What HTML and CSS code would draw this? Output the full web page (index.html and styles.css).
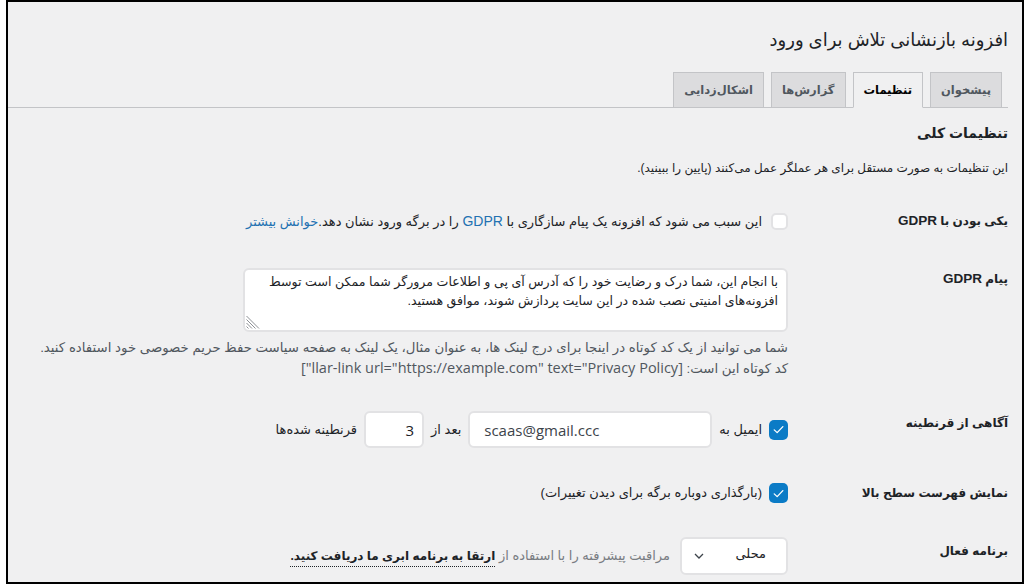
FILE: index.html
```html
<!DOCTYPE html>
<html lang="fa" dir="rtl">
<head>
<meta charset="utf-8">
<title>افزونه بازنشانی تلاش برای ورود</title>
<link rel="stylesheet" href="styles.css">
</head>
<body>
<div class="frame">
  <div class="wrap">
    <h1 class="title">افزونه بازنشانی تلاش برای ورود</h1>
    <nav class="tabs">
      <a class="tab">پیشخوان</a>
      <a class="tab active">تنظیمات</a>
      <a class="tab">گزارش‌ها</a>
      <a class="tab">اشکال‌زدایی</a>
    </nav>
    <h2 class="section">تنظیمات کلی</h2>
    <p class="intro">این تنظیمات به صورت مستقل برای هر عملگر عمل می‌کنند (پایین را ببینید).</p>

    <div class="form">
      <div class="row row-gdpr">
        <div class="th">یکی بودن با <span class="lat">GDPR</span></div>
        <div class="td">
          <label class="inline">
            <span class="cb"></span>
            <span>این سبب می شود که افزونه یک پیام سازگاری با <a class="link lat">GDPR</a> را در برگه ورود نشان دهد.<a class="link">خوانش بیشتر</a></span>
          </label>
        </div>
      </div>

      <div class="row row-msg">
        <div class="th">پیام <span class="lat">GDPR</span></div>
        <div class="td">
          <div class="area-box">
            <textarea class="area">با انجام این، شما درک و رضایت خود را که آدرس آی پی و اطلاعات مرورگر شما ممکن است توسط افزونه‌های امنیتی نصب شده در این سایت پردازش شوند، موافق هستید.</textarea>
            <svg class="grip" viewBox="0 0 14 14" width="14" height="14"><path d="M0.5 1 L13 13.5 M0.5 4.5 L9.5 13.5 M0.5 8 L6 13.5 M0.5 11.5 L2.5 13.5" stroke="#8c8f94" stroke-width="1" fill="none"/></svg>
          </div>
          <p class="desc">شما می توانید از یک کد کوتاه در اینجا برای درج لینک ها، به عنوان مثال، یک لینک به صفحه سیاست حفظ حریم خصوصی خود استفاده کنید.<br>کد کوتاه این است: <span class="code">[llar-link url="https://example.com" text="Privacy Policy"]</span></p>
        </div>
      </div>

      <div class="row row-quar">
        <div class="th">آگاهی از قرنطینه</div>
        <div class="td">
          <div class="inline">
            <span class="cb checked"><svg viewBox="0 0 20 20" width="20" height="20"><path d="M5.5 10.4 L8.6 13.3 L14.6 7" fill="none" stroke="#fff" stroke-width="1.4" stroke-linecap="round" stroke-linejoin="round"/></svg></span>
            <span>ایمیل به</span>
            <input class="field email" type="text" dir="ltr" value="scaas@gmail.ccc">
            <span>بعد از</span>
            <input class="field num" type="text" dir="ltr" value="3">
            <span>قرنطینه شده‌ها</span>
          </div>
        </div>
      </div>

      <div class="row row-top">
        <div class="th">نمایش فهرست سطح بالا</div>
        <div class="td">
          <label class="inline">
            <span class="cb checked"><svg viewBox="0 0 20 20" width="20" height="20"><path d="M5.5 10.4 L8.6 13.3 L14.6 7" fill="none" stroke="#fff" stroke-width="1.4" stroke-linecap="round" stroke-linejoin="round"/></svg></span>
            <span>(بارگذاری دوباره برگه برای دیدن تغییرات)</span>
          </label>
        </div>
      </div>

      <div class="row row-plan">
        <div class="th">برنامه فعال</div>
        <div class="td">
          <div class="inline">
            <div class="select">
              <span class="sel-text">محلی</span>
              <svg class="chev" viewBox="0 0 10 6" width="10" height="6"><path d="M1 1 L5 5 L9 1" fill="none" stroke="#3c434a" stroke-width="1.3"/></svg>
            </div>
            <span class="muted">مراقبت پیشرفته را با استفاده از <a class="upgrade">ارتقا به برنامه ابری ما دریافت کنید.</a></span>
          </div>
        </div>
      </div>
    </div>
  </div>
</div>
</body>
</html>
```

FILE: styles.css
```css
html, body {
  margin: 0;
  padding: 0;
  background: #ffffff;
}

body {
  font-family: "Liberation Sans", "DejaVu Sans", sans-serif;
  font-size: 13px;
  color: #1d2327;
}

.frame {
  box-sizing: border-box;
  width: 1018px;
  height: 584px;
  margin: 0 6px 0 6px;
  border: 2px solid #000;
  background: #f0f0f1;
  overflow: hidden;
}

.wrap {
  padding: 24px 14px 0 0;
}

.title {
  margin: 0;
  font-size: 18px;
  font-weight: 400;
  line-height: 29px;
  color: #1d2327;
}

.tabs {
  display: flex;
  gap: 7px;
  margin-top: 17px;
  padding-right: 6px;
  border-bottom: 1px solid #c3c4c7;
  height: 35px;
}

.tab {
  box-sizing: border-box;
  height: 36px;
  padding: 5px 10px;
  border: 1px solid #c3c4c7;
  background: #dcdcde;
  color: #50575e;
  font-size: 11.5px;
  font-weight: 700;
  line-height: 24px;
}

.tab.active {
  background: #f0f0f1;
  border-bottom-color: #f0f0f1;
  color: #000;
}

.section {
  margin: 13px 0 0;
  font-size: 14px;
  font-weight: 700;
  line-height: 24px;
}

.intro {
  margin: 13px 0 0;
  line-height: 20px;
  font-size: 12px;
}

.form {
  margin-top: 14px;
}

.row {
  display: flex;
  align-items: flex-start;
}

.th {
  flex: 0 0 200px;
  padding: 20px 0 0 10px;
  font-size: 12px;
  font-weight: 700;
  line-height: 18px;
}

.th .lat {
  font-family: "Liberation Sans", sans-serif;
  font-size: 13.5px;
}

.td {
  flex: 1;
  padding-right: 10px;
  padding-left: 10px;
}

.row-gdpr .td { padding-top: 19px; padding-bottom: 18px; }
.row-msg .td { padding-top: 18px; padding-bottom: 15px; }
.row-quar .td { padding-top: 17px; padding-bottom: 16px; }
.row-top .td { padding-top: 19px; padding-bottom: 19px; }
.row-plan .td { padding-top: 15px; }

.inline {
  display: flex;
  align-items: center;
  gap: 7px;
  line-height: 20px;
  font-size: 13px;
}

.row-gdpr .inline { gap: 9px; }

.cb {
  box-sizing: border-box;
  flex: 0 0 auto;
  width: 17px;
  height: 17px;
  border: 2px solid #e2e2e4;
  border-radius: 5px;
  background: #fff;
  display: flex;
  align-items: center;
  justify-content: center;
}

.cb.checked {
  width: 19px;
  height: 20px;
  border: none;
  background: #0b7bc6;
}

.cb svg {
  display: block;
  width: 19px;
  height: 19px;
}

.link {
  color: #2271b1;
  text-decoration: none;
}

.link.lat {
  font-family: "Liberation Sans", sans-serif;
  font-size: 14px;
}

.area-box {
  position: relative;
  width: 545px;
}

.area {
  display: block;
  box-sizing: border-box;
  width: 545px;
  height: 64px;
  margin: 0;
  padding: 3px 8px;
  border: 2px solid #e2e2e4;
  border-radius: 6px;
  background: #fff;
  font-family: "Liberation Sans", "DejaVu Sans", sans-serif;
  font-size: 12.6px;
  line-height: 19px;
  color: #1d2327;
  resize: none;
  overflow: hidden;
}

.grip {
  position: absolute;
  left: 3px;
  bottom: 3px;
  display: block;
}

.desc {
  margin: 6px 0 0;
  color: #50575e;
  font-size: 13.3px;
  line-height: 20px;
}

.code {
  font-family: "Open Sans", "Liberation Sans", sans-serif;
  font-size: 14.5px;
}

.field {
  box-sizing: border-box;
  height: 37px;
  margin: 0;
  border: 2px solid #e2e2e4;
  border-radius: 6px;
  background: #fff;
  color: #3c434a;
  font-family: "Open Sans", "Liberation Sans", sans-serif;
  font-size: 15px;
  outline: none;
}

.email {
  width: 244px;
  padding: 0 14px;
  text-align: left;
}

.num {
  width: 60px;
  padding: 0 8px;
  text-align: right;
  color: #1d2327;
}

.select {
  box-sizing: border-box;
  width: 108px;
  height: 38px;
  border: 2px solid #e2e2e4;
  border-radius: 6px;
  background: #fff;
  display: flex;
  align-items: center;
  justify-content: space-between;
  padding: 0 20px 0 12px;
  font-size: 13px;
}

.sel-text {
  margin-top: -5px;
}

.chev {
  display: block;
}

.muted {
  color: #787c82;
  margin-right: 3px;
}

.upgrade {
  color: #1d2327;
  font-size: 12px;
  font-weight: 700;
  text-decoration: underline dotted #1d2327;
  text-underline-offset: 6px;
}
```
